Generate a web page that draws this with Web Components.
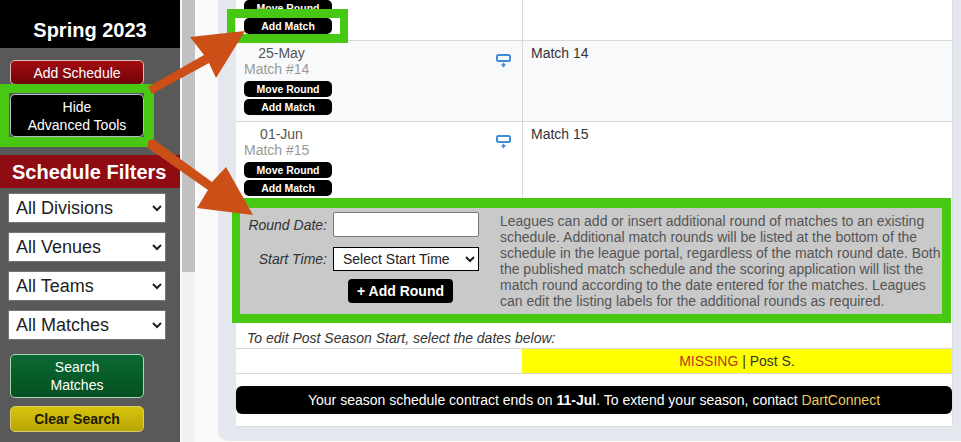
<!DOCTYPE html>
<html>
<head>
<meta charset="utf-8">
<title>Schedule</title>
<style>
  html, body { margin: 0; padding: 0; height: 442px; overflow: hidden; background: #f9f9f9; }
  body { font-family: "Liberation Sans", Arial, sans-serif; }
  dc-app { width: 961px; height: 442px; }
</style>
</head>
<body>
<dc-app>
  <dc-sidebar slot="side" title-text="Spring 2023">
    <dc-button kind="red">Add Schedule</dc-button>
    <dc-button kind="black" style="margin-top:9px">Hide<br>Advanced Tools</dc-button>
    <dc-filters>
      <dc-filter>All Divisions</dc-filter>
      <dc-filter>All Venues</dc-filter>
      <dc-filter>All Teams</dc-filter>
      <dc-filter>All Matches</dc-filter>
    </dc-filters>
    <dc-button kind="green" style="margin-top:14px">Search<br>Matches</dc-button>
    <dc-button kind="yellow" style="margin-top:8px">Clear Search</dc-button>
  </dc-sidebar>

  <dc-panel slot="main">
    <dc-round></dc-round>
    <dc-round date="25-May" num="14" label="Match 14" alt></dc-round>
    <dc-round date="01-Jun" num="15" label="Match 15"></dc-round>
    <dc-add-round>Leagues can add or insert additional round of matches to an existing schedule. Additional match rounds will be listed at the bottom of the schedule in the league portal, regardless of the match round date. Both the published match schedule and the scoring application will list the match round according to the date entered for the matches. Leagues can edit the listing labels for the additional rounds as required.</dc-add-round>
    <dc-post-season></dc-post-season>
    <dc-contract-bar>Your season schedule contract ends on <b>11-Jul</b>. To extend your season, contact <a>DartConnect</a></dc-contract-bar>
  </dc-panel>

  <dc-annotations slot="over"></dc-annotations>
</dc-app>

<script>
class DcApp extends HTMLElement {
  constructor() {
    super();
    this.attachShadow({ mode: 'open' });
    this.shadowRoot.innerHTML = `
      <style>
        :host { display: flex; position: relative; overflow: hidden; }
        .track { width: 13px; margin-left: 2px; background: #f1f1f1; flex: none; }
        .thumb { height: 272px; background: #c1c1c1; }
        .main { flex: 1; min-width: 0; margin-left: 23px; }
      </style>
      <slot name="side"></slot>
      <div class="track"><div class="thumb"></div></div>
      <div class="main"><slot name="main"></slot></div>
      <slot name="over"></slot>
    `;
  }
}

class DcSidebar extends HTMLElement {
  constructor() {
    super();
    this.attachShadow({ mode: 'open' });
    this.shadowRoot.innerHTML = `
      <style>
        :host { display: block; flex: none; width: 180px; height: 442px; background: #595959; }
        .head {
          height: 48px;
          box-sizing: border-box;
          padding-top: 19px;
          background: #000;
          color: #fff;
          font-size: 20px;
          line-height: 23px;
          font-weight: bold;
          text-align: center;
        }
        .body { display: flex; flex-direction: column; padding-top: 12px; }
      </style>
      <div class="head"></div>
      <div class="body"><slot></slot></div>
    `;
    this.shadowRoot.querySelector('.head').textContent = this.getAttribute('title-text');
  }
}

class DcButton extends HTMLElement {
  constructor() {
    super();
    this.attachShadow({ mode: 'open' });
    this.shadowRoot.innerHTML = `
      <style>
        :host {
          display: block;
          width: 134px;
          margin-left: 10px;
          box-sizing: border-box;
          border: 1px solid #ccc;
          border-radius: 5px;
          color: #fff;
          font-size: 14px;
          line-height: 18px;
          text-align: center;
        }
        :host([kind="red"]) {
          height: 25px;
          padding-top: 3px;
          background: linear-gradient(#a30d12, #6f0408);
          border-color: #e0b9ba;
        }
        :host([kind="black"]) {
          height: 43px;
          padding-top: 3px;
          background: #000;
          border-color: #bbb;
        }
        :host([kind="green"]) {
          height: 44px;
          padding-top: 3px;
          background: linear-gradient(#0b6a33, #044f20);
          border-color: #a8d8b4;
        }
        :host([kind="yellow"]) {
          height: 26px;
          padding-top: 3px;
          background: linear-gradient(#d8c40c, #b7a506);
          border-color: #d9cd6a;
          color: #1c1a05;
          font-weight: bold;
          font-size: 14px;
        }
      </style>
      <slot></slot>
    `;
  }
}

class DcFilters extends HTMLElement {
  constructor() {
    super();
    this.attachShadow({ mode: 'open' });
    this.shadowRoot.innerHTML = `
      <style>
        :host { display: block; margin-top: 18px; }
        .title {
          height: 33px;
          box-sizing: border-box;
          padding: 4px 0 0 12px;
          background: #8f0c12;
          color: #fff;
          font-size: 20px;
          line-height: 26px;
          font-weight: bold;
          white-space: nowrap;
        }
        .list { display: flex; flex-direction: column; gap: 9px; margin: 5px 0 0 8px; }
      </style>
      <div class="title">Schedule Filters</div>
      <div class="list"><slot></slot></div>
    `;
  }
}

class DcFilter extends HTMLElement {
  constructor() {
    super();
    this.attachShadow({ mode: 'open' });
    this.shadowRoot.innerHTML = `
      <style>
        :host { display: block; width: 158px; height: 30px; }
        select {
          width: 100%;
          height: 100%;
          box-sizing: border-box;
          border: 1px solid #767676;
          border-radius: 0;
          padding: 0 0 0 3px;
          background: #fff;
          color: #222;
          font: 18px "Liberation Sans", Arial, sans-serif;
        }
      </style>
      <select><option></option></select>
    `;
    this.shadowRoot.querySelector('option').textContent = this.textContent;
  }
}

class DcPanel extends HTMLElement {
  constructor() {
    super();
    this.attachShadow({ mode: 'open' });
    this.shadowRoot.innerHTML = `
      <style>
        :host {
          display: block;
          height: 441px;
          box-sizing: border-box;
          padding: 0 8px 0 18px;
          background: #e4e7ee;
          border-bottom-left-radius: 10px;
          overflow: hidden;
        }
        .table {
          margin-top: -40px;
          background: #fff;
          border: solid #dcdcdc;
          border-width: 0 1px 1px 0;
          padding-bottom: 12px;
        }
      </style>
      <div class="table"><slot></slot></div>
    `;
  }
}

class DcRound extends HTMLElement {
  constructor() {
    super();
    this.attachShadow({ mode: 'open' });
    this.shadowRoot.innerHTML = `
      <style>
        :host {
          display: grid;
          grid-template-columns: 287px 1fr;
          height: 81px;
          box-sizing: border-box;
          border-bottom: 1px solid #d8d8d8;
          background: #fff;
          font-size: 14px;
          line-height: 16px;
        }
        :host([alt]) { background: #f8f9fb; }
        .left {
          display: flex;
          justify-content: space-between;
          padding: 4px 11px 0 8px;
          border-right: 1px solid #d8d8d8;
        }
        .info { width: 88px; }
        .when { width: 75px; height: 32px; text-align: center; }
        .date { color: #555; }
        .num { color: #999; text-align: left; white-space: nowrap; }
        .btn {
          height: 16px;
          margin-top: 2px;
          border-radius: 5px;
          background: #000;
          color: #fff;
          font-size: 10.5px;
          line-height: 16px;
          font-weight: bold;
          text-align: center;
        }
        .when + .btn { margin-top: 4px; }
        svg { display: block; margin-top: 9px; }
        .right { padding: 4px 8px; color: #333; }
      </style>
      <div class="left">
        <div class="info">
          <div class="when">
            <div class="date"></div>
            <div class="num"></div>
          </div>
          <div class="btn">Move Round</div>
          <div class="btn">Add Match</div>
        </div>
        <svg width="15" height="14" viewBox="0 0 15 14">
          <rect x="1" y="1" width="13" height="6" rx="1.5" fill="none" stroke="#3f8cdb" stroke-width="2"/>
          <path d="M7.5 8.8v4.4M5.3 11h4.4" stroke="#3f8cdb" stroke-width="1.6"/>
        </svg>
      </div>
      <div class="right"></div>
    `;
    // the first row is scrolled past the top, only its buttons still show
    if (this.hasAttribute('date')) {
      this.shadowRoot.querySelector('.date').textContent = this.getAttribute('date');
      this.shadowRoot.querySelector('.num').textContent = 'Match #' + this.getAttribute('num');
      this.shadowRoot.querySelector('.right').textContent = this.getAttribute('label');
    }
  }
}

class DcAddRound extends HTMLElement {
  constructor() {
    super();
    this.attachShadow({ mode: 'open' });
    this.shadowRoot.innerHTML = `
      <style>
        :host {
          display: grid;
          grid-template-columns: 239px 1fr;
          column-gap: 21px;
          position: relative;
          height: 125px;
          box-sizing: border-box;
          margin: -5px 1px 0 -4px;
          border: solid #47c914;
          border-width: 10px 9px 9px 8px;
          background: #c9c9c9;
          font-size: 14px;
          line-height: 16px;
        }
        .form {
          display: grid;
          grid-template-columns: 87px 146px;
          column-gap: 6px;
          row-gap: 10px;
          align-content: start;
          padding-top: 4px;
        }
        label { font-style: italic; color: #333; text-align: right; align-self: center; white-space: nowrap; }
        input {
          height: 25px;
          box-sizing: border-box;
          border: 1px solid #767676;
          border-radius: 2px;
          background: #fff;
          padding: 0;
        }
        select {
          height: 24px;
          box-sizing: border-box;
          border: 1px solid #000;
          border-radius: 0;
          background: #fff;
          color: #222;
          padding: 0 0 0 5px;
          font: 14px "Liberation Sans", Arial, sans-serif;
        }
        .add {
          grid-column: 2;
          justify-self: start;
          width: 105px;
          height: 24px;
          margin: -2px 0 0 15px;
          border-radius: 4px;
          background: #000;
          color: #fff;
          font-weight: bold;
          line-height: 24px;
          text-align: center;
        }
        .help { color: #555; padding-top: 5px; }
      </style>
      <div class="form">
        <label>Round Date:</label><input type="text">
        <label>Start Time:</label><select><option>Select Start Time</option></select>
        <div class="add">+ Add Round</div>
      </div>
      <div class="help"><slot></slot></div>
    `;
  }
}

class DcPostSeason extends HTMLElement {
  constructor() {
    super();
    this.attachShadow({ mode: 'open' });
    this.shadowRoot.innerHTML = `
      <style>
        :host { display: block; font-size: 14px; line-height: 16px; color: #333; }
        .note {
          height: 26px;
          box-sizing: border-box;
          padding: 7px 0 0 11px;
          border-bottom: 1px solid #d8d8d8;
          font-style: italic;
        }
        .row {
          display: grid;
          grid-template-columns: 286px 1fr;
          height: 25px;
          box-sizing: border-box;
          border-bottom: 1px solid #d8d8d8;
        }
        .miss { background: #ffff00; text-align: center; line-height: 24px; }
        .miss span { color: #b8371f; }
      </style>
      <div class="note">To edit Post Season Start, select the dates below:</div>
      <div class="row">
        <div></div>
        <div class="miss"><span>MISSING</span> | Post S.</div>
      </div>
    `;
  }
}

class DcContractBar extends HTMLElement {
  constructor() {
    super();
    this.attachShadow({ mode: 'open' });
    this.shadowRoot.innerHTML = `
      <style>
        :host {
          display: block;
          height: 28px;
          margin-top: 12px;
          border-radius: 6px;
          background: #000;
          color: #fff;
          font-size: 14px;
          line-height: 28px;
          text-align: center;
        }
        ::slotted(a) { color: #e6cc60; }
      </style>
      <slot></slot>
    `;
  }
}

// the green boxes and arrows drawn on top of the screenshot
class DcAnnotations extends HTMLElement {
  constructor() {
    super();
    this.attachShadow({ mode: 'open' });
    this.shadowRoot.innerHTML = `
      <style>
        :host { display: block; position: absolute; inset: 0; pointer-events: none; }
        .box { position: absolute; box-sizing: border-box; border: solid #47c914; }
        .hide { left: -2px; top: 84px; width: 156px; height: 63px; border-width: 9px 10px 10px 11px; }
        .match { left: 227px; top: 9px; width: 121px; height: 34px; border-width: 9px 8px 9px 8px; }
        svg { position: absolute; left: 0; top: 0; }
      </style>
      <div class="box hide"></div>
      <div class="box match"></div>
      <svg width="961" height="442" viewBox="0 0 961 442">
        <path fill="#cb4f17" d="M148 87 204 55 190 37 245 31 216 78 209 63 152 94Z"/>
        <path fill="#cb4f17" d="M148 141 153 139 212 182 226 167 253 215 197 208 208 190 148 148Z"/>
      </svg>
    `;
  }
}

customElements.define('dc-app', DcApp);
customElements.define('dc-sidebar', DcSidebar);
customElements.define('dc-button', DcButton);
customElements.define('dc-filters', DcFilters);
customElements.define('dc-filter', DcFilter);
customElements.define('dc-panel', DcPanel);
customElements.define('dc-round', DcRound);
customElements.define('dc-add-round', DcAddRound);
customElements.define('dc-post-season', DcPostSeason);
customElements.define('dc-contract-bar', DcContractBar);
customElements.define('dc-annotations', DcAnnotations);
</script>
</body>
</html>
